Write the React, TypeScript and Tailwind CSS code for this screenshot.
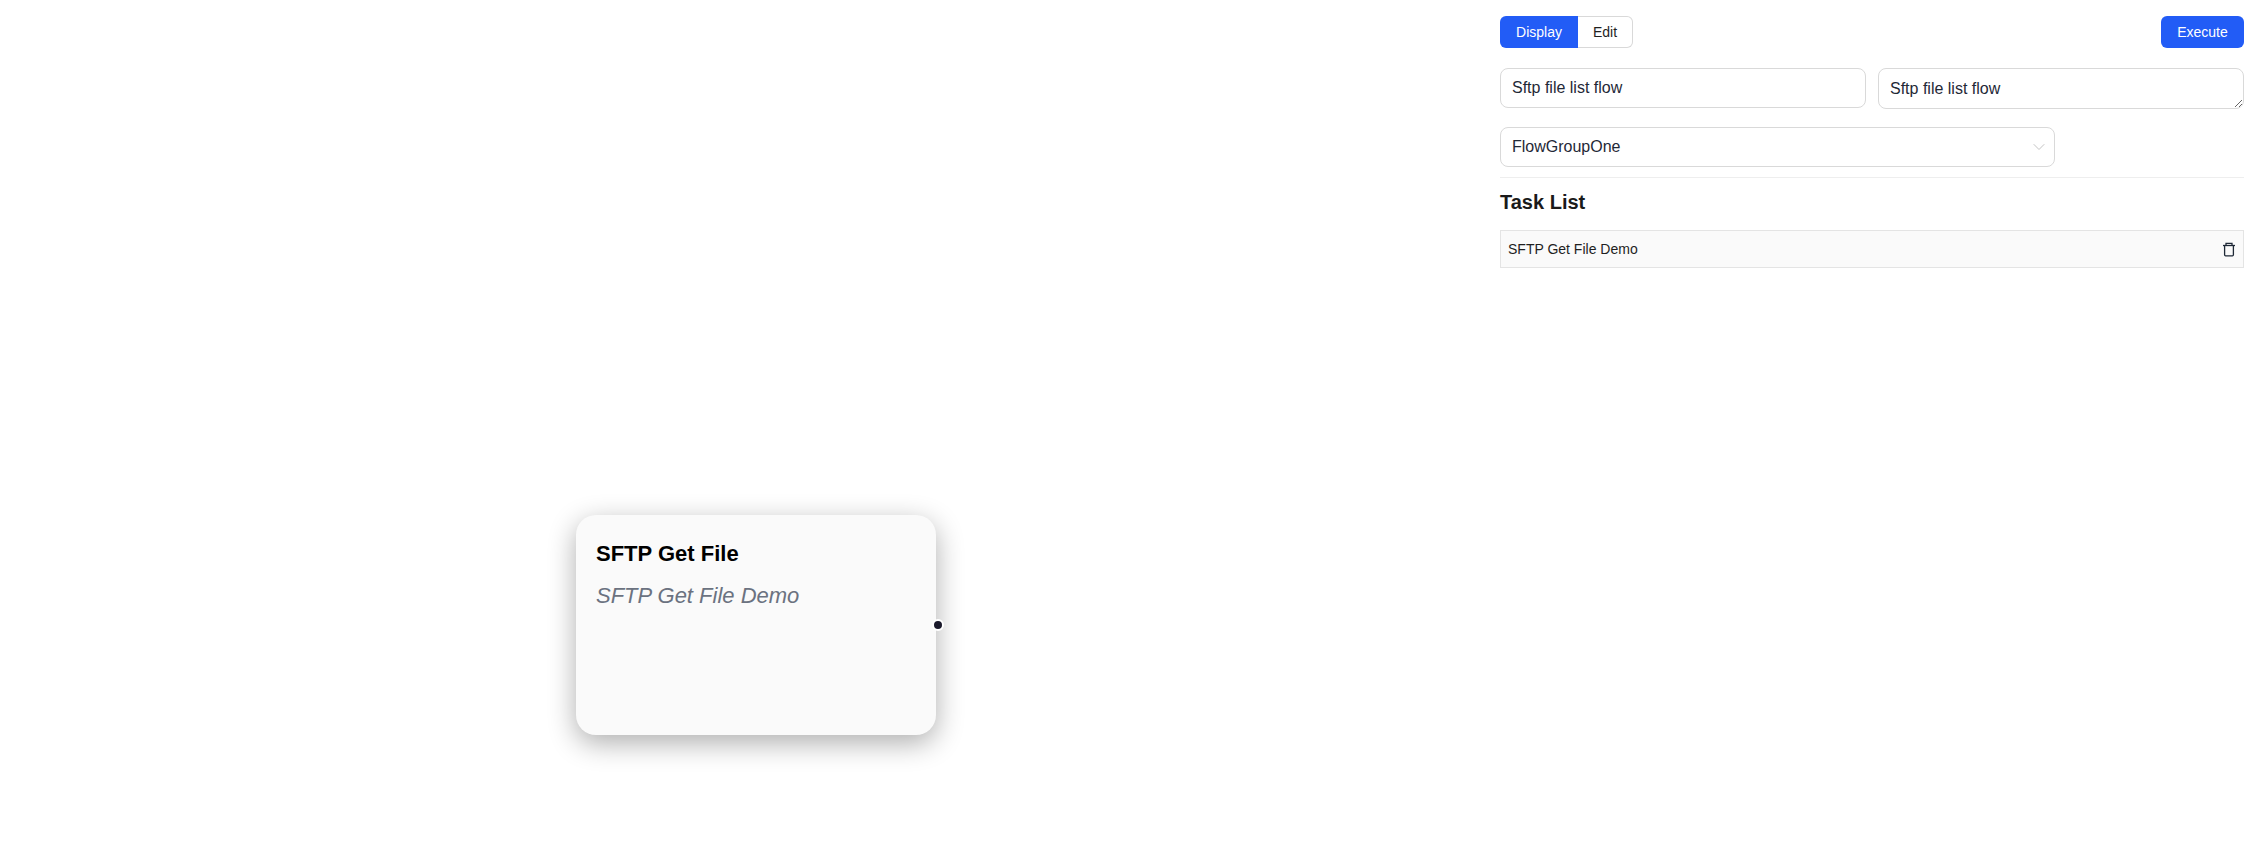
import { ChevronDown } from "lucide-react"

function TrashIcon() {
  return (
    <svg width="14" height="15" viewBox="0 0 14 15" fill="none" stroke="#1f2937" strokeWidth="1.3">
      <path d="M1 3.5h12" />
      <path d="M4 3.5V1.3h6v2.2" />
      <path d="M2.6 3.5v9.3c0 .7.4 1 1 1h6.8c.6 0 1-.3 1-1V3.5" />
    </svg>
  )
}

function TaskNode() {
  return (
    <div className="absolute left-[576px] top-[515px] h-[220px] w-[360px] rounded-[20px] bg-[#fafafa] px-5 pt-[25px] shadow-[0_8px_28px_rgba(0,0,0,0.32)]">
      <div className="text-[22px] leading-7 font-bold text-black">SFTP Get File</div>
      <div className="mt-[14px] text-[22px] leading-7 italic text-[#6b7280]">SFTP Get File Demo</div>
      <div className="absolute right-[-8px] top-[104px] size-[12px] rounded-full border-2 border-white bg-[#1a192b]" />
    </div>
  )
}

export default function App() {
  return (
    <div className="flex h-screen bg-white font-['Liberation_Sans',sans-serif] text-[#1f2937]">
      <div className="relative flex-1">
        <TaskNode />
      </div>
      <div className="w-[784px] pl-4 pr-6 pt-4">
        <div className="flex items-center justify-between">
          <div className="flex h-8 text-sm">
            <button className="w-[78px] rounded-l-md bg-[#225cf6] text-white">Display</button>
            <button className="w-[55px] rounded-r-md border border-l-0 border-[#d9d9d9] text-[#1f1f1f]">Edit</button>
          </div>
          <button className="h-8 w-[83px] rounded-md bg-[#225cf6] text-sm text-white">Execute</button>
        </div>
        <div className="mt-5 flex items-start gap-3">
          <input
            readOnly
            defaultValue="Sftp file list flow"
            className="h-10 flex-1 rounded-lg border border-[#d9d9d9] px-[11px] text-base outline-none"
          />
          <textarea
            readOnly
            defaultValue="Sftp file list flow"
            className="h-[41px] flex-1 rounded-lg border border-[#d9d9d9] px-[11px] py-2 text-base outline-none"
          />
        </div>
        <div className="mt-[18px] flex h-10 w-[555px] items-center justify-between rounded-lg border border-[#d9d9d9] pl-[11px] pr-[5px] text-base">
          <span>FlowGroupOne</span>
          <ChevronDown size={20} strokeWidth={1.2} className="text-[#c4c4c4]" />
        </div>
        <div className="mt-[10px] border-t border-[#eeeeee]" />
        <h3 className="mt-[10px] text-xl leading-7 font-bold text-[#1a1a1a]">Task List</h3>
        <div className="mt-[14px] flex h-[38px] items-center justify-between border border-[#e4e4e4] bg-[#fafafa] pl-[7px] pr-[7px] text-sm text-[#1f1f1f]">
          <span>SFTP Get File Demo</span>
          <TrashIcon />
        </div>
      </div>
    </div>
  )
}
